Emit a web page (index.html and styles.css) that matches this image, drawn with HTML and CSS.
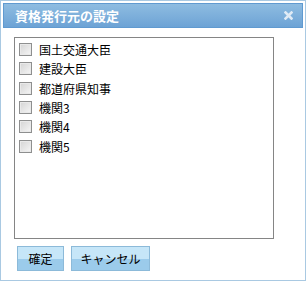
FILE: index.html
```html
<!DOCTYPE html>
<html lang="ja">

<head>
    <meta charset="UTF-8">
    <title>資格発行元の設定</title>
    <link rel="stylesheet" href="styles.css">
</head>

<body>

    <div class="dialog">
        <div class="titlebar">
            <span class="title">資格発行元の設定</span>
            <svg class="close" width="9" height="9" viewBox="0 0 9 9">
                <path d="M1.5 1.5 L7.5 7.5 M7.5 1.5 L1.5 7.5" stroke="#dfeaf5" stroke-width="2.6" stroke-linecap="square" />
            </svg>
        </div>

        <div class="contenido">
            <ul class="lista">
                <li><label><input type="checkbox"> 国土交通大臣</label></li>
                <li><label><input type="checkbox"> 建設大臣</label></li>
                <li><label><input type="checkbox"> 都道府県知事</label></li>
                <li><label><input type="checkbox"> 機関3</label></li>
                <li><label><input type="checkbox"> 機関4</label></li>
                <li><label><input type="checkbox"> 機関5</label></li>
            </ul>

            <div class="botones">
                <button class="boton boton-ok">確定</button>
                <button class="boton boton-cancelar">キャンセル</button>
            </div>
        </div>
    </div>

</body>

</html>
```

FILE: styles.css
```css
body {
    margin: 0;
    background: #fff;
    font-family: "Noto Sans CJK JP", sans-serif;
    font-size: 12px;
}

.dialog {
    width: 306px;
    height: 281px;
    box-sizing: border-box;
    border: 1px solid #a9c9e2;
    padding: 2px;
    background: #fff;
}

.titlebar {
    height: 25px;
    box-sizing: border-box;
    border: 1px solid #609ad0;
    background: linear-gradient(#8ebce1, #6da3d5);
    display: flex;
    align-items: center;
    justify-content: space-between;
    padding: 0 9px 0 11px;
}

.title {
    color: #fff;
    font-weight: bold;
    font-size: 13px;
    letter-spacing: 0;
    line-height: 1;
}

.close {
    display: block;
}

.contenido {
    padding: 9px 0 0 11px;
}

.lista {
    list-style: none;
    margin: 0;
    width: 260px;
    height: 202px;
    box-sizing: border-box;
    border: 1px solid #858585;
    padding: 5px 0 0 4px;
}

.lista li {
    height: 19.33px;
}

.lista label {
    display: flex;
    align-items: flex-start;
    gap: 7px;
    color: #000;
    line-height: 13px;
}

.lista input {
    appearance: none;
    -webkit-appearance: none;
    margin: 0;
    width: 13px;
    height: 13px;
    box-sizing: border-box;
    border: 1px solid #8e8f8f;
    background: linear-gradient(135deg, #d4d4d4, #f6f6f6);
    box-shadow: inset 0 0 0 1px #e9e9e9;
}

.botones {
    display: flex;
    gap: 7px;
    margin-top: 7px;
    padding-left: 3px;
}

.boton {
    height: 25px;
    box-sizing: border-box;
    border: 1px solid #8cbad9;
    background: linear-gradient(#c6e6f8 0, #c6e6f8 50%, #9bcbeb 50%, #9bcbeb 100%);
    font-family: "Noto Sans CJK JP", sans-serif;
    font-size: 12px;
    color: #000;
    padding: 0;
    cursor: pointer;
}

.boton-ok {
    width: 47px;
}

.boton-cancelar {
    width: 79px;
}
```
